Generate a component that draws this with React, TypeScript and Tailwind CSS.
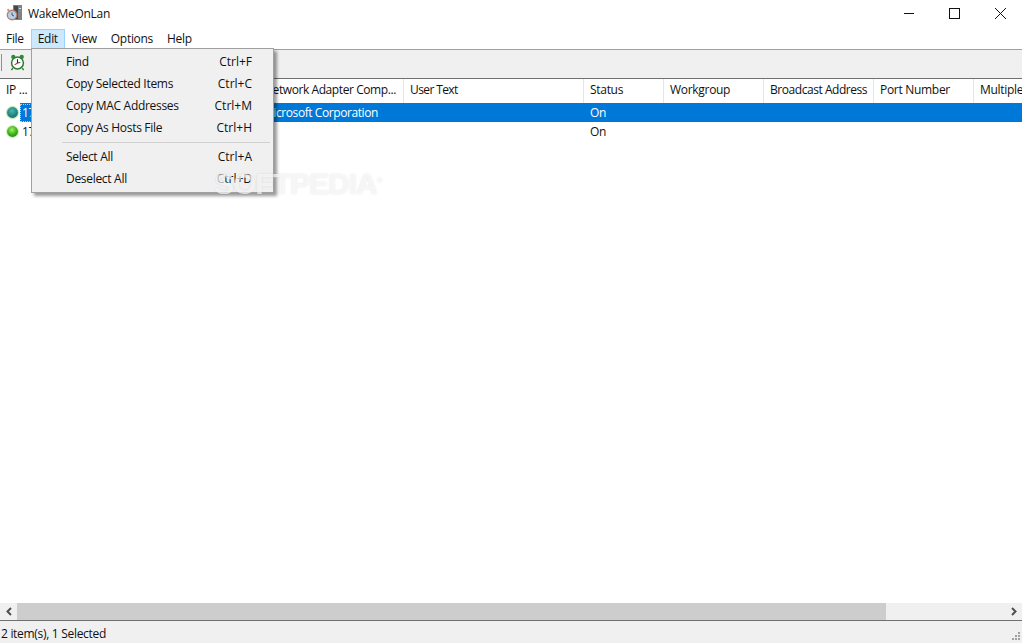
import { Fragment } from "react"

const columns = [
  { label: "IP ...", width: "w-[32px]", spacing: "" },
  { label: "Computer Name", width: "w-[110px]", spacing: "" },
  { label: "MAC Address", width: "w-[116px]", spacing: "" },
  { label: "Network Adapter Comp...", width: "w-[146px]", spacing: "tracking-[-0.42px]" },
  { label: "User Text", width: "w-[180px]", spacing: "tracking-[-0.6px]" },
  { label: "Status", width: "w-[80px]", spacing: "" },
  { label: "Workgroup", width: "w-[100px]", spacing: "" },
  { label: "Broadcast Address", width: "w-[110px]", spacing: "tracking-[-0.45px]" },
  { label: "Port Number", width: "w-[100px]", spacing: "" },
  { label: "Multiple", width: "w-[100px]", spacing: "" },
]

const menu = [
  [
    { label: "Find", key: "Ctrl+F" },
    { label: "Copy Selected Items", key: "Ctrl+C" },
    { label: "Copy MAC Addresses", key: "Ctrl+M" },
    { label: "Copy As Hosts File", key: "Ctrl+H" },
  ],
  [
    { label: "Select All", key: "Ctrl+A" },
    { label: "Deselect All", key: "Ctrl+D" },
  ],
]

function AppIcon() {
  return (
    <svg width="18" height="18" viewBox="0 0 18 18">
      <rect x="7" y="0" width="9" height="15" fill="#7d8286" />
      <rect x="8" y="1" width="4" height="13" fill="#43484b" />
      <rect x="13" y="3" width="2" height="1" fill="#dfe1e2" />
      <rect x="13" y="6" width="2" height="1" fill="#58b558" />
      <circle cx="6" cy="10" r="4.7" fill="#b5d2ec" stroke="#b8806f" strokeWidth="1.4" />
      <path d="M6 7.5V10l2 1" fill="none" stroke="#445" strokeWidth="0.9" />
      <circle cx="2.3" cy="5" r="1.2" fill="#c9a27c" />
    </svg>
  )
}

function AlarmIcon() {
  return (
    <svg width="15" height="17" viewBox="0 0 16 18">
      <circle cx="3.5" cy="3" r="2.3" fill="#2f8a35" />
      <circle cx="12.5" cy="3" r="2.3" fill="#2f8a35" />
      <path d="M3 15l-1.5 2M13 15l1.5 2" stroke="#2f7a30" strokeWidth="1.5" />
      <circle cx="8" cy="9.5" r="6.3" fill="#fff" stroke="#2b7d33" strokeWidth="1.6" />
      <path d="M8 5.5v4" stroke="#222" strokeWidth="1.2" />
      <path d="M8 9.5l-3 2" stroke="#d22" strokeWidth="1.2" />
      <path d="M8 9.5l3-.5" stroke="#333" strokeWidth="1" />
    </svg>
  )
}

function Ball({ id, light, mid, dark, halo }: { id: string; light: string; mid: string; dark: string; halo: string }) {
  return (
    <svg width="13" height="13" viewBox="0 0 13 13">
      <defs>
        <radialGradient id={id} cx="45%" cy="35%" r="65%">
          <stop offset="0%" stopColor={light} />
          <stop offset="60%" stopColor={mid} />
          <stop offset="100%" stopColor={dark} />
        </radialGradient>
      </defs>
      <circle cx="6.5" cy="6.5" r="6.5" fill={halo} />
      <circle cx="6.5" cy="6.5" r="5.4" fill={`url(#${id})`} />
    </svg>
  )
}

export default function App() {
  return (
    <div className="relative flex h-[643px] w-[1022px] flex-col overflow-hidden bg-white font-['Open_Sans',sans-serif] text-[12px] tracking-[-0.3px] text-[#111]">
      {/* title bar */}
      <div className="flex h-[29px] items-center">
        <div className="ml-[6px] mr-[4px] -mt-[2px]">
          <AppIcon />
        </div>
        <span className="-mt-[2px]">WakeMeOnLan</span>
        <div className="ml-auto flex items-center">
          <svg width="46" height="28" viewBox="0 0 46 28" className="-mt-[2px]">
            <path d="M20 13.5h10" stroke="#111" />
          </svg>
          <svg width="46" height="28" viewBox="0 0 46 28" className="-mt-[2px]">
            <rect x="19.5" y="8.5" width="10" height="10" fill="none" stroke="#111" />
          </svg>
          <svg width="46" height="28" viewBox="0 0 46 28" className="-mt-[2px]">
            <path d="M19 8l11 11M30 8l-11 11" stroke="#111" />
          </svg>
        </div>
      </div>

      {/* menu bar */}
      <div className="flex h-[20px] items-center">
        <span className="px-[6px]">File</span>
        <span className="ml-[1px] flex h-[20px] w-[34px] items-center justify-center border border-[#99d1ff] bg-[#cce8ff]">Edit</span>
        <span className="pl-[7px] pr-[7px]">View</span>
        <span className="pl-[7px] pr-[7px]">Options</span>
        <span className="pl-[7px] pr-[7px]">Help</span>
      </div>

      {/* toolbar */}
      <div className="flex h-[30px] items-center border-y border-t-[#a0a0a0] border-b-[#707070] bg-[#f0f0f0]">
        <div className="mb-[3px] ml-[1px] h-[17px] w-px bg-[#909090]" />
        <div className="mb-[3px] ml-[8px]">
          <AlarmIcon />
        </div>
      </div>

      {/* list view */}
      <div className="flex min-h-0 flex-1 flex-col">
        <div className="flex h-[24px] shrink-0 items-center whitespace-nowrap">
          {columns.map((c) => (
            <div key={c.label} className={`${c.width} ${c.spacing} flex h-full shrink-0 items-center overflow-hidden border-r border-[#e5e5e5] pb-[2px] pl-[6px]`}>
              {c.label}
            </div>
          ))}
        </div>
        <div className="flex h-[19px] items-center whitespace-nowrap">
          <div className="flex w-[20px] shrink-0 items-center pl-[6px]">
            <Ball id="ball-a" light="#4fb5a8" mid="#268a8c" dark="#1f6d70" halo="#b9e6b0" />
          </div>
          <div className="flex h-full flex-1 items-center bg-[#0078d7] pt-[1px] text-white">
            <div className="flex h-[18px] w-[238px] items-center pl-[2px] outline-1 -outline-offset-1 outline-dotted outline-[#ffc080]">172.17.0.1</div>
            <div className="w-[326px] pl-[5px] tracking-[-0.42px]">Microsoft Corporation</div>
            <div className="pl-[6px]">On</div>
          </div>
        </div>
        <div className="flex h-[19px] items-center whitespace-nowrap">
          <div className="flex w-[20px] shrink-0 items-center pl-[6px]">
            <Ball id="ball-b" light="#a4f06a" mid="#45b81e" dark="#2b8a12" halo="#c8efb0" />
          </div>
          <div className="flex flex-1 items-center">
            <div className="w-[570px] pl-[2px]">172.17.0.1</div>
            <div>On</div>
          </div>
        </div>
      </div>

      {/* horizontal scrollbar */}
      <div className="flex h-[17px] shrink-0 items-center bg-[#f0f0f0]">
        <div className="flex w-[17px] shrink-0 justify-center">
          <svg width="8" height="9" viewBox="0 0 8 9">
            <path d="M6 1L2.5 4.5 6 8" fill="none" stroke="#505050" strokeWidth="2" />
          </svg>
        </div>
        <div className="h-full w-[869px] bg-[#cdcdcd]" />
        <div className="ml-auto flex w-[17px] shrink-0 justify-center">
          <svg width="8" height="9" viewBox="0 0 8 9">
            <path d="M2 1l3.5 3.5L2 8" fill="none" stroke="#505050" strokeWidth="2" />
          </svg>
        </div>
      </div>

      {/* status bar */}
      <div className="flex h-[23px] shrink-0 items-center border-t border-t-[#707070] bg-[#f0f0f0] pl-[1px]">
        <span className="mt-[4px]">2 item(s), 1 Selected</span>
        <svg width="10" height="10" viewBox="0 0 10 10" className="ml-auto mr-[1px] mt-[8px]" fill="#a0a0a0">
          <rect x="7" y="1" width="2" height="2" />
          <rect x="4" y="4" width="2" height="2" />
          <rect x="7" y="4" width="2" height="2" />
          <rect x="1" y="7" width="2" height="2" />
          <rect x="4" y="7" width="2" height="2" />
          <rect x="7" y="7" width="2" height="2" />
        </svg>
      </div>

      {/* edit menu */}
      <div className="absolute left-[31px] top-[48px] w-[243px] border border-[#a0a0a0] bg-[#f0f0f0] py-[2px] shadow-[3px_3px_3px_rgba(0,0,0,0.4)]">
        {menu.map((group, i) => (
          <Fragment key={i}>
            {i > 0 && <div className="my-[3px] ml-[30px] mr-[3px] h-px bg-[#d0d0d0]" />}
            {group.map((item) => (
              <div key={item.label} className="flex h-[22px] items-center justify-between pl-[34px] pr-[21px]">
                <span>{item.label}</span>
                <span className="tracking-[0px]">{item.key}</span>
              </div>
            ))}
          </Fragment>
        ))}
      </div>

      {/* watermark */}
      <div className="absolute left-[214px] top-[161px] font-['Liberation_Sans',sans-serif] text-[30px] font-bold tracking-[-1px] text-white/70 [text-shadow:0_0_2px_rgba(0,0,0,0.12)]">
        SOFTPEDIA<span className="align-super text-[8px]">®</span>
      </div>
    </div>
  )
}
